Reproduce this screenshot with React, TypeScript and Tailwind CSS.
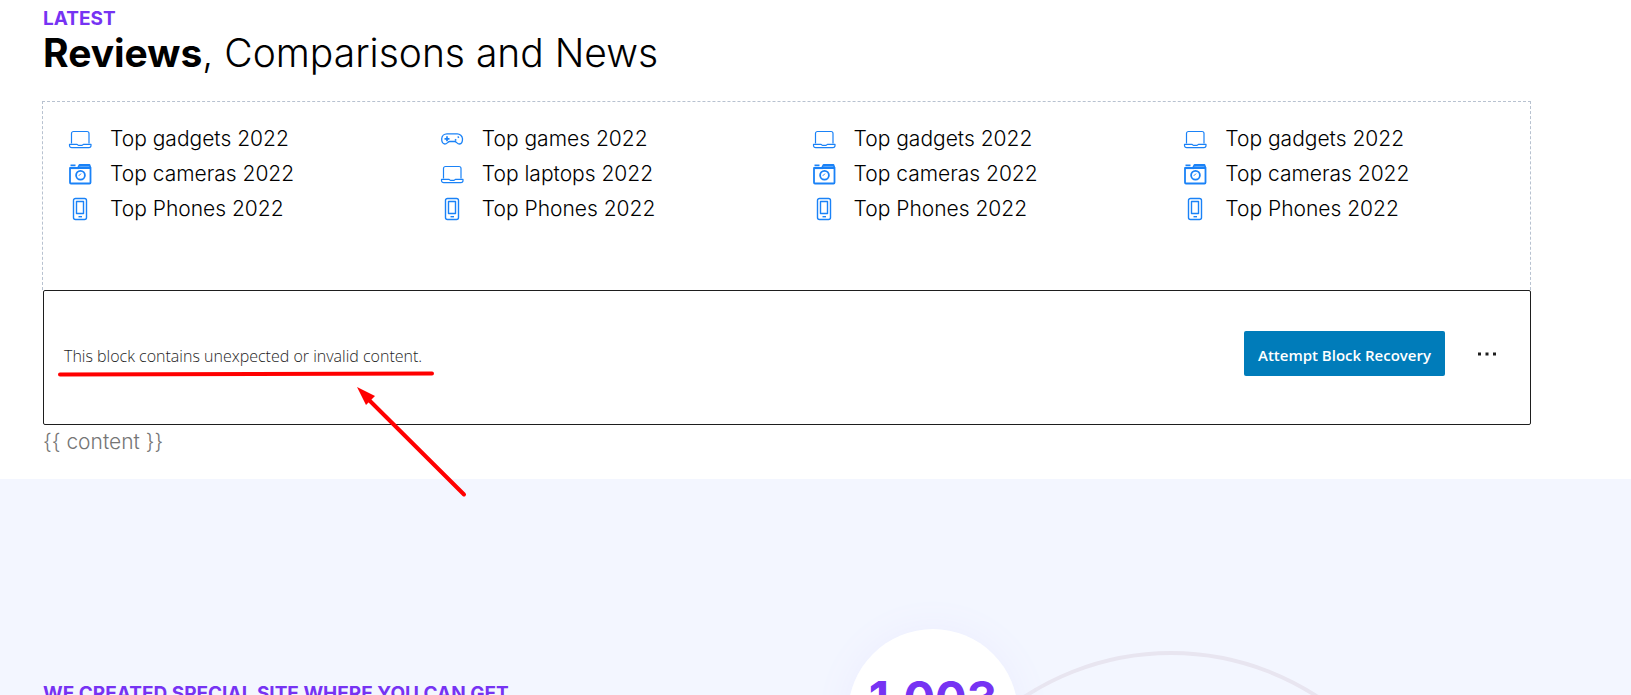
import React from "react";

type IconName = "laptop" | "camera" | "phone" | "gamepad";

const icons: Record<IconName, React.ReactNode> = {
  laptop: (
    <g strokeWidth="1.2">
      <path d="M3.500 16.500V6.500a2 2 0 0 1 2-2h13.500a2 2 0 0 1 2 2v10" />
      <path d="M1.500 17.300h7.500c.7 0 .8 1 1.600 1h3.300c.8 0 .9-1 1.600-1h7.500V18.500a2.200 2.200 0 0 1-2.200 2.200H3.700a2.200 2.200 0 0 1-2.200-2.200z" />
    </g>
  ),
  camera: (
    <g strokeWidth="1.8">
      <path d="M2 6h20.500v14.500a1 1 0 0 1-1 1H3a1 1 0 0 1-1-1z" />
      <path d="M2.500 3.300h5M10 6l1.500-3h10l1 3" />
      <path d="M3 6.600h8l1-1.800h9" strokeWidth="1" />
      <circle cx="12.500" cy="13.300" r="4.400" />
      <path d="M10.800 13.800l2.200-2.200" strokeWidth="1" />
    </g>
  ),
  phone: (
    <g strokeWidth="1.4">
      <rect x="5.500" y="1.500" width="13" height="21" rx="2" />
      <rect x="8.500" y="4.500" width="7" height="12" />
      <path d="M10.500 19.700h3.500" />
    </g>
  ),
  gamepad: (
    <g strokeWidth="1.3">
      <path d="M7 6.800h10a5.300 5.300 0 0 1 5.500 5c.1 3.200-1 5.200-3 5.200-2.500 0-3-2.500-4.800-2.500h-5c-1.800 0-2.500 2.500-4.900 2.500-2.100 0-3.200-2.200-3.100-5.200a5.300 5.300 0 0 1 5.300-5z" />
      <path d="M7 9.300v5M4.500 11.800h5M15 13.500l1.200-1.200M17.800 10.700l1-1" strokeWidth="1.700" />
    </g>
  ),
};

function Icon({ name }: { name: IconName }) {
  return (
    <svg viewBox="0 0 24 24" fill="none" stroke="#1a82f7" strokeLinejoin="round" className="size-6 shrink-0" aria-hidden="true">
      {icons[name]}
    </svg>
  );
}

const standard: [IconName, string][] = [
  ["laptop", "Top gadgets 2022"],
  ["camera", "Top cameras 2022"],
  ["phone", "Top Phones 2022"],
];

const columns: [IconName, string][][] = [
  standard,
  [
    ["gamepad", "Top games 2022"],
    ["laptop", "Top laptops 2022"],
    ["phone", "Top Phones 2022"],
  ],
  standard,
  standard,
];

export default function App() {
  return (
    <div className="h-screen overflow-hidden bg-white font-['Inter',sans-serif] text-black">
      <main className="relative pt-[9px] pr-[100px] pl-[42px]">
        <header className="pl-px">
          <p className="text-[19px] leading-5 font-bold text-[#7633f3]">LATEST</p>
          <h1 className="text-[39px] leading-12 font-light">
            <strong className="font-bold">Reviews</strong>, Comparisons and News
          </h1>
        </header>
        <section className="mt-6 grid h-[189px] grid-cols-4 border border-b-0 border-dashed border-[#b8c2d0] pt-[19px]">
          {columns.map((items, i) => (
            <ul key={i} className="pl-[25px]">
              {items.map(([icon, label]) => (
                <li key={label} className="flex h-[35px] items-center gap-[18px] text-[21px] font-light">
                  <Icon name={icon} />
                  {label}
                </li>
              ))}
            </ul>
          ))}
        </section>
        <section className="ml-px flex h-[135px] items-center rounded-xs border border-[#1e1e1e] pr-[29px] pb-2 pl-5 font-['Open_Sans',sans-serif]">
          <p className="grow pt-1 text-[16px] font-light text-[#1e1e1e]">This block contains unexpected or invalid content.</p>
          <button className="mr-7 h-[45px] w-[201px] rounded-xs bg-[#007cba] pt-1 text-[15px] font-semibold text-white">Attempt Block Recovery</button>
          <button aria-label="More options">
            <svg viewBox="0 0 28 28" className="size-7" fill="#1e1e1e">
              <path d="M5 12.500h3v3H5zM12.500 12.500h3v3h-3zM20 12.500h3v3h-3z" />
            </svg>
          </button>
        </section>
        <p className="pl-px text-[21px] leading-[34px] font-light text-[#757575]">{"{{ content }}"}</p>
        <svg viewBox="0 0 420 130" className="pointer-events-none absolute top-[370px] left-[52px] h-[130px] w-[420px]" fill="none" stroke="#f00" strokeWidth="4" strokeLinecap="round" aria-hidden="true">
          <path d="M8 4.500L380 3.500" />
          <path d="M412 124.500L316 29" />
          <path d="M305 17L323 26L314 35z" fill="#f00" stroke="none" />
        </svg>
      </main>
      <section className="mt-5 flex h-[216px] overflow-hidden bg-[#f3f6ff] pl-[43px]">
        <h2 className="w-1/2 pt-[203px] text-[19px] leading-6 font-bold whitespace-nowrap text-[#7633f3]">WE CREATED SPECIAL SITE WHERE YOU CAN GET</h2>
        <div className="relative grow">
          <svg viewBox="0 0 540 540" className="absolute top-[171px] left-[64px] size-[540px]" fill="none" stroke="#e8e5f0" strokeWidth="4" aria-hidden="true">
            <circle cx="270" cy="270" r="267" />
          </svg>
          <div className="absolute top-[150px] left-[11px] flex size-[170px] justify-center rounded-full bg-white pt-[39px] text-[47px] leading-[60px] font-bold text-[#7633f3] shadow-[0_0_36px_#ecedff]">1,003</div>
        </div>
      </section>
    </div>
  );
}
